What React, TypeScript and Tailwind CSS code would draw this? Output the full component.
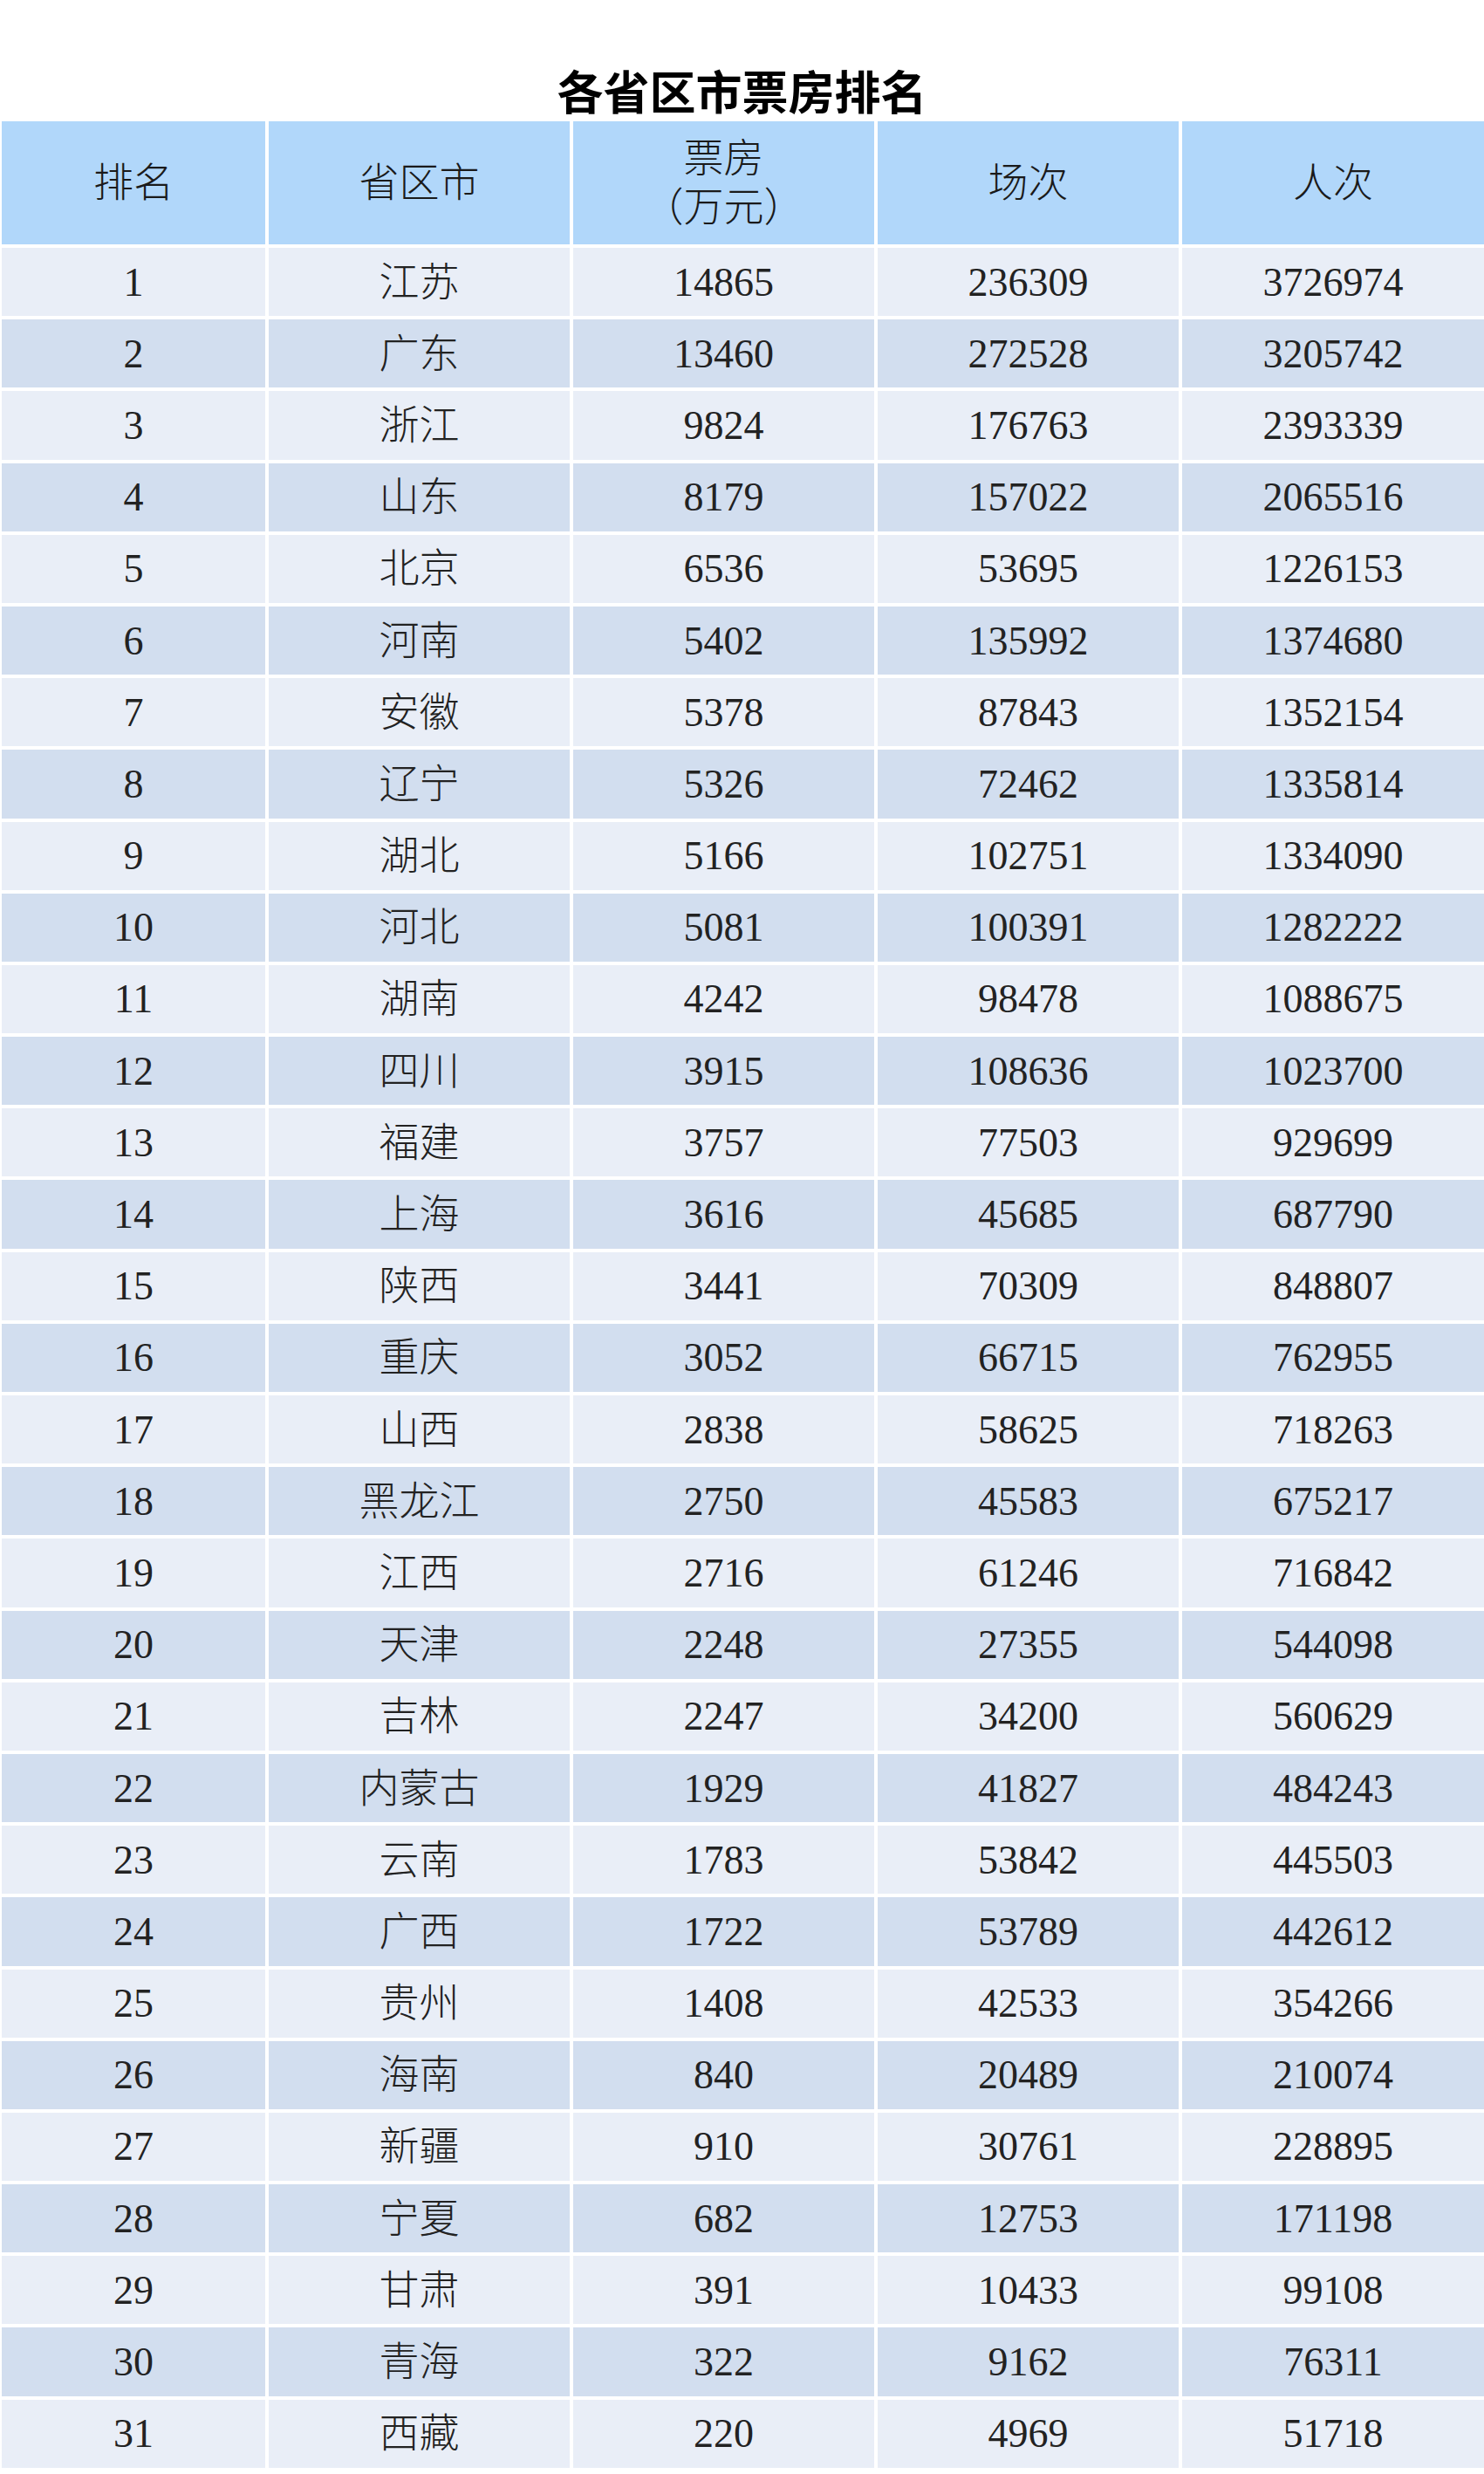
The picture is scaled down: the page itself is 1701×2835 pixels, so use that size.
const rows: [string, string, number, number, number][] = [
  ["1", "江苏", 14865, 236309, 3726974],
  ["2", "广东", 13460, 272528, 3205742],
  ["3", "浙江", 9824, 176763, 2393339],
  ["4", "山东", 8179, 157022, 2065516],
  ["5", "北京", 6536, 53695, 1226153],
  ["6", "河南", 5402, 135992, 1374680],
  ["7", "安徽", 5378, 87843, 1352154],
  ["8", "辽宁", 5326, 72462, 1335814],
  ["9", "湖北", 5166, 102751, 1334090],
  ["10", "河北", 5081, 100391, 1282222],
  ["11", "湖南", 4242, 98478, 1088675],
  ["12", "四川", 3915, 108636, 1023700],
  ["13", "福建", 3757, 77503, 929699],
  ["14", "上海", 3616, 45685, 687790],
  ["15", "陕西", 3441, 70309, 848807],
  ["16", "重庆", 3052, 66715, 762955],
  ["17", "山西", 2838, 58625, 718263],
  ["18", "黑龙江", 2750, 45583, 675217],
  ["19", "江西", 2716, 61246, 716842],
  ["20", "天津", 2248, 27355, 544098],
  ["21", "吉林", 2247, 34200, 560629],
  ["22", "内蒙古", 1929, 41827, 484243],
  ["23", "云南", 1783, 53842, 445503],
  ["24", "广西", 1722, 53789, 442612],
  ["25", "贵州", 1408, 42533, 354266],
  ["26", "海南", 840, 20489, 210074],
  ["27", "新疆", 910, 30761, 228895],
  ["28", "宁夏", 682, 12753, 171198],
  ["29", "甘肃", 391, 10433, 99108],
  ["30", "青海", 322, 9162, 76311],
  ["31", "西藏", 220, 4969, 51718],
];

function HeaderCell({ children }: { children: React.ReactNode }) {
  return (
    <div className="flex h-[141px] flex-col items-center justify-center bg-[#b1d7fa] text-center leading-[56px] text-[#1a1a1a]">
      {children}
    </div>
  );
}

export default function App() {
  return (
    <div className="min-h-[2835px] w-[1701px] bg-white pb-[7px]">
      {/* Title */}
      <div className="h-[139px] pt-[73px] text-center">
        <h1
          className="text-[53px] font-bold leading-[60px] text-black"
          style={{ fontFamily: "'Noto Sans CJK SC', 'Noto Sans', sans-serif" }}
        >
          各省区市票房排名
        </h1>
      </div>

      {/* Table */}
      <div
        className="grid grid-cols-[302px_345px_345px_345px_346px] gap-[4px] pl-[2px] text-[46px] font-light"
        style={{ fontFamily: "'Liberation Serif', 'Noto Sans CJK SC', serif" }}
      >
        <HeaderCell>排名</HeaderCell>
        <HeaderCell>省区市</HeaderCell>
        <HeaderCell>
          <span>票房</span>
          <span>（万元）</span>
        </HeaderCell>
        <HeaderCell>场次</HeaderCell>
        <HeaderCell>人次</HeaderCell>

        {rows.map((r, i) => {
          const bg = i % 2 === 0 ? "bg-[#e9eef7]" : "bg-[#d2deef]";
          return r.map((v, j) => (
            <div
              key={`${i}-${j}`}
              className={`flex h-[78.2px] items-center justify-center text-[#222] ${bg}`}
            >
              {v}
            </div>
          ));
        })}
      </div>
    </div>
  );
}
